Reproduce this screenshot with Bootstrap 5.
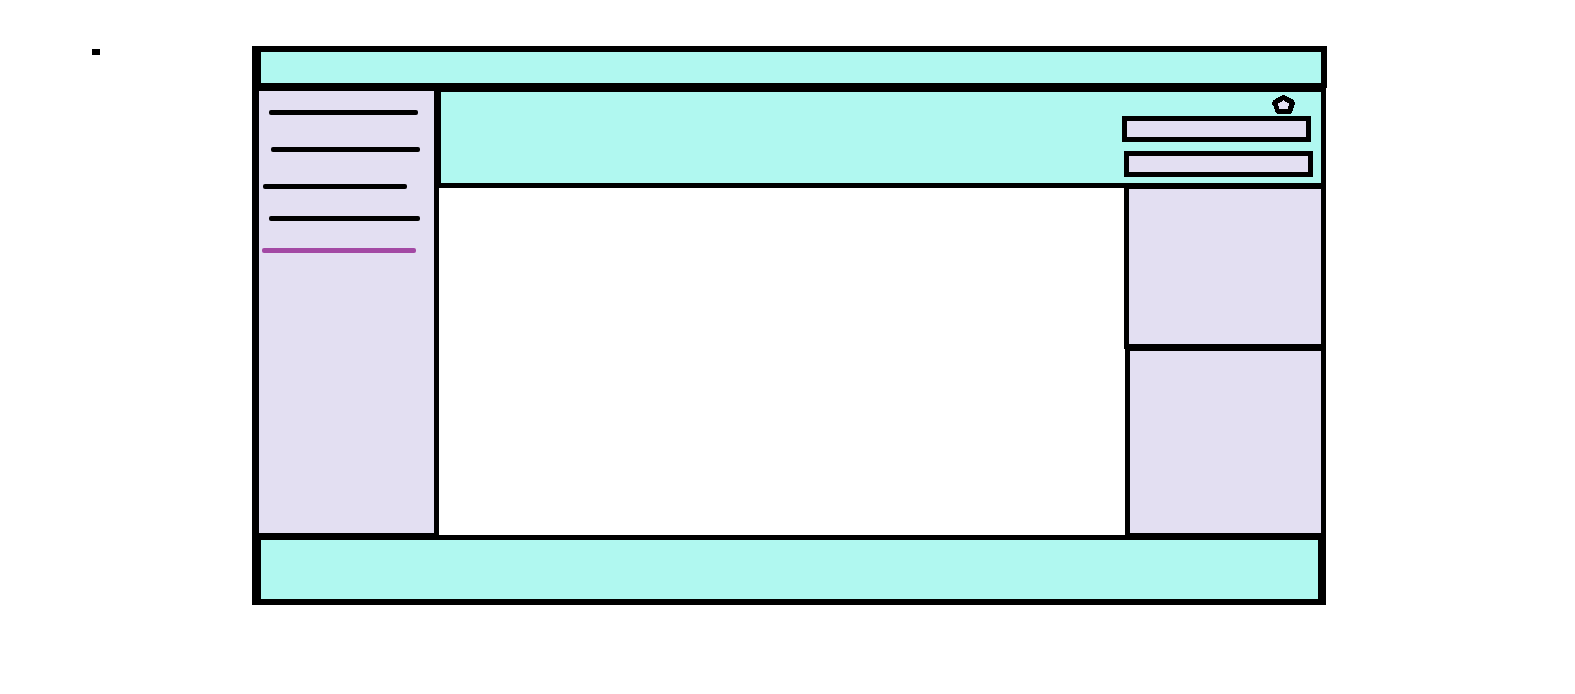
<!DOCTYPE html>
<html lang="en">
<head>
<meta charset="utf-8">
<meta name="viewport" content="width=device-width, initial-scale=1">
<title>Page wireframe</title>
<link href="https://cdn.jsdelivr.net/npm/bootstrap@5.3.0/dist/css/bootstrap.min.css" rel="stylesheet">
<style>
  :root { --aqua: #b0f8f0; --lilac: #e3dff2; --plum: #a349a4; }
  body { font-family: "Liberation Sans", sans-serif; background: #fff; }
  .gutter { width: 252px; padding: 49px 0 0 92px; }
  .marker { width: 8px; height: 6px; }
  .frame { margin: 46px 248px 0 0; min-width: 0; }
  .frame, .frame * { border-color: #000; }
  .aqua { background: var(--aqua); }
  .lilac { background: var(--lilac); }
  .ink { border: 0 solid #000; }
  .topbar { min-height: 42px; border-width: 6px 6px 5px 9px; }
  .inset { margin-right: 1px; }
  .sidebar { width: 187px; min-height: 447px; border-width: 3px 5px 2px 7px; padding-top: 19px; }
  .menu-line { height: 5px; border-radius: 2px; background: #000; }
  .menu-line.current { background: var(--plum); }
  .wide-gap { margin-bottom: 32px; }
  .slim-gap { margin-bottom: 27px; }
  .in-a { margin-left: 10px; margin-right: 16px; }
  .in-b { margin-left: 12px; margin-right: 14px; }
  .in-c { margin-left: 4px; margin-right: 27px; }
  .in-d { margin-left: 10px; margin-right: 14px; }
  .in-e { margin-left: 3px; margin-right: 18px; }
  .banner { min-height: 100px; border-width: 4px 5px 5px 2px; padding: 3px 8px 0 0; }
  .badge-shape { width: 23px; height: 19px; margin: 0 18px 2px 0; }
  .field { width: 189px; height: 26px; padding: 0 4px; border: 5px solid #000; border-radius: 0; font-size: 12px; }
  .field-first { margin: 0 2px 9px 0; }
  .side { width: 202px; }
  .panel-top { min-height: 161px; border-width: 1px 5px 5px 5px; }
  .panel-low { margin-left: 1px; border-width: 2px 5px 2px 5px; }
  .bottombar { min-height: 70px; border-width: 5px 8px 6px 9px; }
</style>
</head>
<body>
<div class="d-flex align-items-start">
  <div class="gutter flex-shrink-0"><div class="marker bg-black"></div></div>
  <div class="frame flex-grow-1">
    <header class="topbar ink aqua"></header>
    <div class="inset">
      <div class="d-flex">
        <nav class="sidebar ink lilac flex-shrink-0" aria-label="Sections">
          <a href="#one" class="menu-line d-block in-a wide-gap" aria-label="Section one"></a>
          <a href="#two" class="menu-line d-block in-b wide-gap" aria-label="Section two"></a>
          <a href="#three" class="menu-line d-block in-c slim-gap" aria-label="Section three"></a>
          <a href="#four" class="menu-line d-block in-d slim-gap" aria-label="Section four"></a>
          <a href="#five" class="menu-line d-block in-e current" aria-label="Section five" aria-current="page"></a>
        </nav>
        <div class="d-flex flex-column flex-grow-1">
          <form class="banner ink aqua d-flex flex-column align-items-end">
            <svg class="badge-shape" viewBox="0 0 23 19" shape-rendering="crispEdges" aria-hidden="true">
              <path fill="#000" d="M10 0h3v1h2v1h2v1h2v1h2v1h1v2h1v3h-1v3h-1v3h-1v2h-1v1H5v-1H4v-1H3v-3H2v-3H1v-1H0V7h1V5h2V4h1V3h2V2h2V1h2z"/>
              <path fill="#e3dff2" d="M11 5h1v1h1v1h2v1h2v3h-1v3H7v-3H6V8h2V7h2V6h1z"/>
            </svg>
            <input type="text" class="field field-first lilac" aria-label="User name">
            <input type="password" class="field lilac" aria-label="Password">
          </form>
          <div class="d-flex flex-grow-1">
            <main class="flex-grow-1 bg-white"></main>
            <aside class="side flex-shrink-0 d-flex flex-column">
              <section class="panel-top ink lilac"></section>
              <section class="panel-low ink lilac flex-grow-1"></section>
            </aside>
          </div>
        </div>
      </div>
      <footer class="bottombar ink aqua"></footer>
    </div>
  </div>
</div>
<script src="https://cdn.jsdelivr.net/npm/bootstrap@5.3.0/dist/js/bootstrap.bundle.min.js"></script>
</body>
</html>
